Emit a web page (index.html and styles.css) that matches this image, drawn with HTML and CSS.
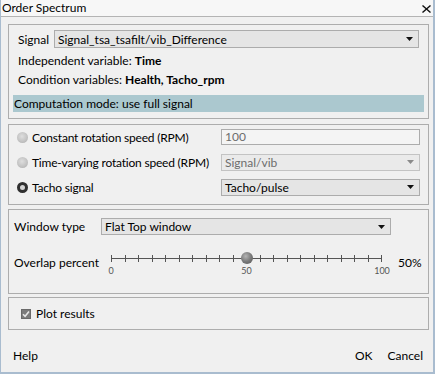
FILE: index.html
```html
<!DOCTYPE html>
<html lang="en">
<head>
    <meta charset="UTF-8">
    <title>Order Spectrum</title>
    <link rel="stylesheet" href="styles.css">
</head>
<body>
    <div class="dialog">
        <div class="titlebar">
            <span class="title">Order Spectrum</span>
            <svg class="close" width="9" height="8" viewBox="0 0 9 8"><path d="M0.5 0.5 L8.5 7.5 M8.5 0.5 L0.5 7.5" stroke="#111" stroke-width="1.4" fill="none"/></svg>
        </div>

        <div class="content">
            <section class="group group-signal">
                <div class="signal-row">
                    <span class="signal-label">Signal</span>
                    <div class="combo combo-signal">
                        <span>Signal_tsa_tsafilt/vib_Difference</span>
                        <svg class="arrow" width="7" height="4" viewBox="0 0 7 4"><path d="M0 0 H7 L3.5 4 Z" fill="#111"/></svg>
                    </div>
                </div>
                <div class="info">Independent variable: <b>Time</b></div>
                <div class="info">Condition variables: <b>Health, Tacho_rpm</b></div>
                <div class="mode">Computation mode: use full signal</div>
            </section>

            <section class="group group-speed">
                <div class="speed-row">
                    <span class="radio radio-off"></span>
                    <span class="speed-label">Constant rotation speed (RPM)</span>
                    <div class="field field-off">100</div>
                </div>
                <div class="speed-row">
                    <span class="radio radio-off"></span>
                    <span class="speed-label">Time-varying rotation speed (RPM)</span>
                    <div class="combo combo-speed combo-off">
                        <span>Signal/vib</span>
                        <svg class="arrow" width="7" height="4" viewBox="0 0 7 4"><path d="M0 0 H7 L3.5 4 Z" fill="#8a8a8a"/></svg>
                    </div>
                </div>
                <div class="speed-row">
                    <span class="radio radio-on"></span>
                    <span class="speed-label">Tacho signal</span>
                    <div class="combo combo-speed">
                        <span>Tacho/pulse</span>
                        <svg class="arrow" width="7" height="4" viewBox="0 0 7 4"><path d="M0 0 H7 L3.5 4 Z" fill="#111"/></svg>
                    </div>
                </div>
            </section>

            <section class="group group-window">
                <div class="window-row">
                    <span class="window-label">Window type</span>
                    <div class="combo combo-window">
                        <span>Flat Top window</span>
                        <svg class="arrow" width="7" height="4" viewBox="0 0 7 4"><path d="M0 0 H7 L3.5 4 Z" fill="#111"/></svg>
                    </div>
                </div>
                <div class="overlap-row">
                    <span class="overlap-label">Overlap percent</span>
                    <div class="slider">
                        <div class="track"></div>
                        <div class="ticks">
                            <i></i><i></i><i></i><i></i><i></i><i></i><i></i>
                            <i></i><i></i><i></i><i></i><i></i><i></i><i></i>
                            <i></i><i></i><i></i><i></i><i></i><i></i><i></i>
                        </div>
                        <div class="knob" style="left: 50%;"></div>
                        <span class="scale" style="left: 0%;">0</span>
                        <span class="scale" style="left: 50%;">50</span>
                        <span class="scale" style="left: 100%;">100</span>
                    </div>
                    <span class="overlap-value">50%</span>
                </div>
            </section>

            <section class="group group-plot">
                <div class="plot-row">
                    <svg class="check" width="10" height="10" viewBox="0 0 10 10">
                        <rect x="0" y="0" width="10" height="10" fill="#7c7c7c"/>
                        <rect x="0.5" y="0.5" width="9" height="9" fill="none" stroke="#6a6a6a"/>
                        <path d="M2 5.2 L4.1 7.3 L8 2.6" stroke="#e8e8e8" stroke-width="1.6" fill="none"/>
                    </svg>
                    <span>Plot results</span>
                </div>
            </section>
        </div>

        <div class="footer">
            <span>Help</span>
            <div class="buttons">
                <span>OK</span>
                <span>Cancel</span>
            </div>
        </div>
    </div>
</body>
</html>
```

FILE: styles.css
```css
body {
    margin: 0;
    font-family: "Segoe UI", Lato, "Open Sans", sans-serif;
    font-size: 12px;
    color: #000;
    background: #f0f0f0;
}

.dialog {
    width: 435px;
    height: 374px;
    box-sizing: border-box;
    display: flex;
    flex-direction: column;
    background: #f0f0f0;
    border-left: 1px solid #a9bccf;
    border-right: 2px solid #a9bccf;
    border-bottom: 2px solid #a9bccf;
}

.titlebar {
    height: 16px;
    display: flex;
    align-items: center;
    justify-content: space-between;
    padding: 0 2px 0 1px;
    background: #f7f7f7;
    border-bottom: 1px solid #b4b4b4;
}

.title {
    line-height: 16px;
}

.close {
    display: block;
    margin-top: 1px;
}

.content {
    display: flex;
    flex-direction: column;
    padding: 0 4px 0 7px;
}

.group {
    border: 1px solid #adadad;
}

/* signal */
.group-signal {
    margin-top: 7px;
    padding: 5px 4px 6px 4px;
}

.signal-row {
    display: flex;
    align-items: center;
    height: 18px;
    padding-left: 5px;
    margin-right: 5px;
}

.signal-label {
    width: 36px;
}

.combo {
    box-sizing: border-box;
    display: flex;
    align-items: center;
    justify-content: space-between;
    padding: 0 5px 0 3px;
    background: #e5e5e5;
    border: 1px solid #acacac;
}

.combo-signal {
    flex: 1;
    height: 18px;
}

.combo-off {
    color: #6d6d6d;
    background: #eaeaea;
    border-color: #c3c3c3;
}

.arrow {
    display: block;
}

.info {
    padding-left: 5px;
    line-height: 19px;
}

.signal-row + .info {
    margin-top: 3px;
}

.mode {
    margin-top: 6px;
    height: 17px;
    line-height: 17px;
    padding-left: 1px;
    background: #abc8cf;
}

/* rotation speed */
.group-speed {
    margin-top: 5px;
    padding: 3px 4px 8px 4px;
    display: flex;
    flex-direction: column;
    gap: 7px;
}

.speed-row {
    display: flex;
    align-items: center;
    height: 18px;
    padding-left: 4px;
    margin-right: 4px;
}

.radio {
    box-sizing: border-box;
    width: 11px;
    height: 11px;
    border-radius: 50%;
    margin-right: 4px;
}

.radio-off {
    background: radial-gradient(circle at 45% 40%, #dedede 0, #c4c4c4 55%, #a9a9a9 100%);
}

.radio-on {
    border: 3px solid #303030;
    background: #d4d4d4;
}

.speed-label {
    width: 189px;
    white-space: nowrap;
    letter-spacing: -0.2px;
}

.field {
    box-sizing: border-box;
    width: 199px;
    height: 16px;
    line-height: 14px;
    padding-left: 3px;
    border: 1px solid #acacac;
    background: #f4f4f4;
}

.field-off {
    color: #6d6d6d;
}

.combo-speed {
    width: 199px;
    height: 17px;
}

/* window */
.group-window {
    margin-top: 4px;
    padding: 8px 4px 15px 5px;
}

.window-row {
    display: flex;
    align-items: center;
    height: 17px;
}

.window-label {
    width: 87px;
}

.combo-window {
    width: 290px;
    height: 17px;
}

.overlap-row {
    display: flex;
    align-items: flex-start;
    height: 30px;
    margin-top: 13px;
}

.overlap-label {
    width: 97px;
    margin-top: 5px;
    line-height: 19px;
    white-space: nowrap;
}

.slider {
    position: relative;
    width: 271px;
    height: 30px;
}

.track {
    position: absolute;
    left: 0;
    right: 0;
    top: 10px;
    height: 1px;
    background: #555;
}

.ticks {
    position: absolute;
    left: 0;
    right: 0;
    top: 7px;
    height: 7px;
    display: flex;
    justify-content: space-between;
}

.ticks i {
    width: 1px;
    height: 7px;
    background: #555;
}

.knob {
    position: absolute;
    top: 4px;
    width: 12px;
    height: 12px;
    margin-left: -6px;
    border-radius: 50%;
    background: radial-gradient(circle at 40% 35%, #b5b5b5 0, #7a7a7a 50%, #555 100%);
}

.scale {
    position: absolute;
    top: 18px;
    transform: translateX(-50%);
    font-size: 9px;
    line-height: 10px;
    color: #555;
}

.overlap-value {
    margin-left: 16px;
    margin-top: 5px;
    line-height: 19px;
}

/* plot */
.group-plot {
    margin-top: 3px;
    padding: 6px 4px 6px 12px;
}

.plot-row {
    display: flex;
    align-items: center;
    height: 19px;
    gap: 5px;
}

.check {
    display: block;
}

/* footer */
.footer {
    flex: 1;
    display: flex;
    align-items: center;
    justify-content: space-between;
    padding: 8px 10px 0 12px;
}

.buttons {
    display: flex;
    gap: 15px;
}
```
